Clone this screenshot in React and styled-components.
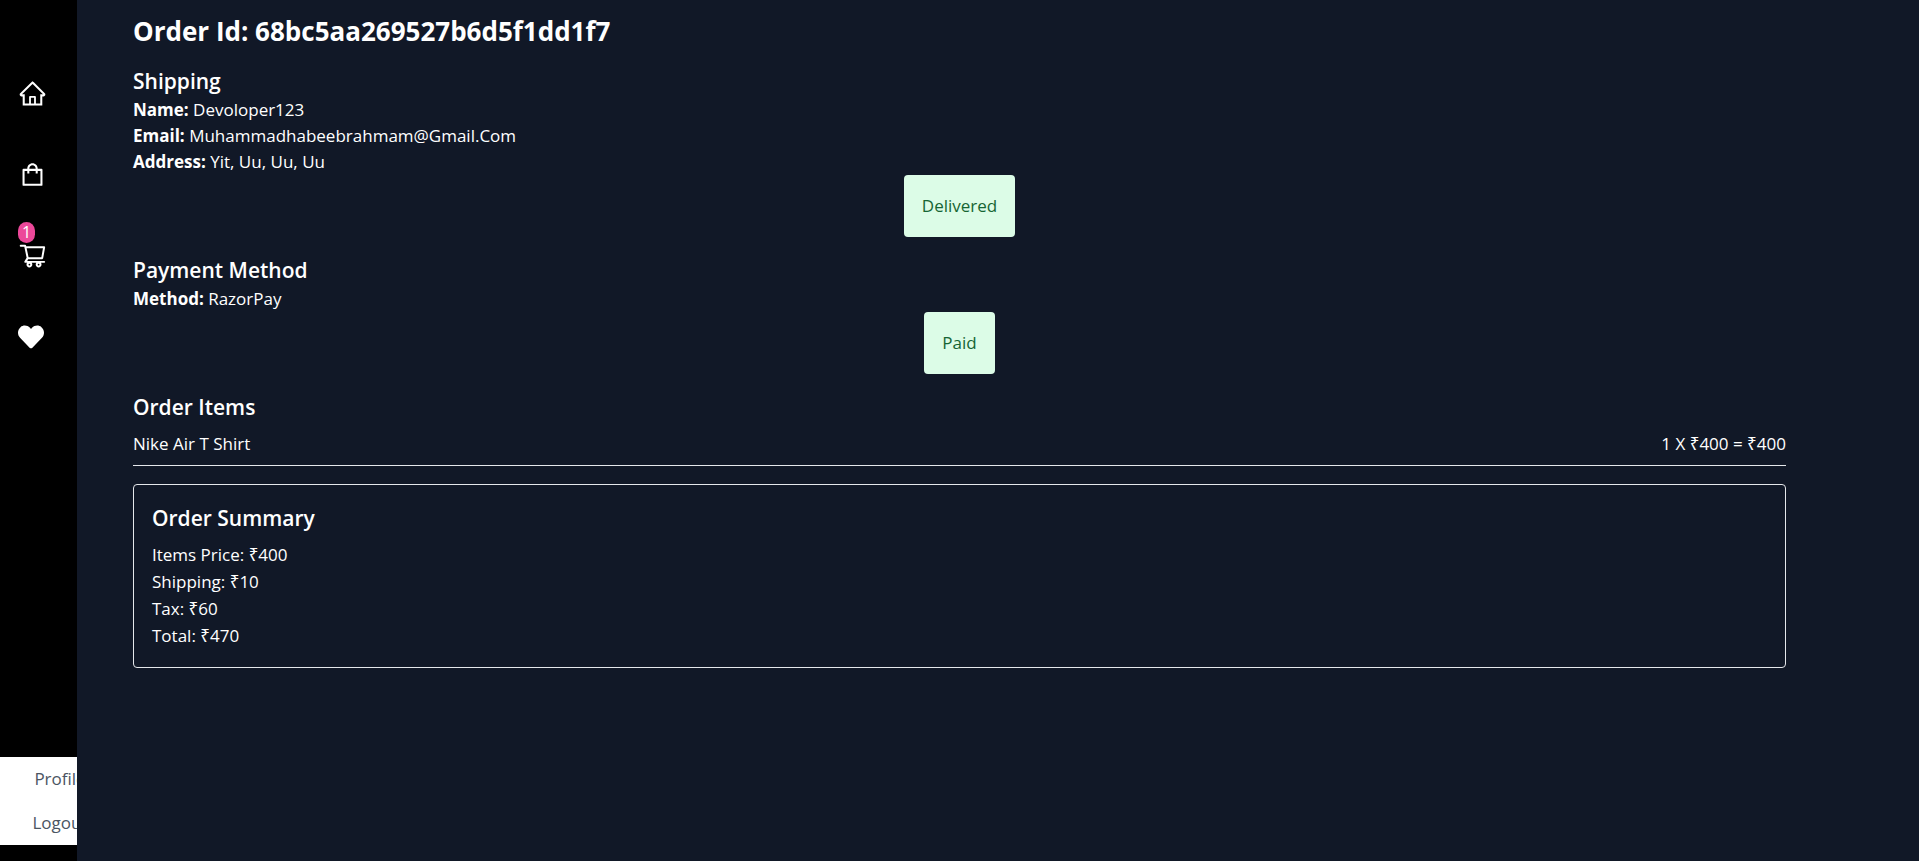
import React from "react";
import styled, { createGlobalStyle } from "styled-components";
import {
  AiOutlineHome,
  AiOutlineShopping,
  AiOutlineShoppingCart,
} from "react-icons/ai";
import { FaHeart } from "react-icons/fa";

const GlobalStyle = createGlobalStyle`
  *, *::before, *::after { box-sizing: border-box; }
  body {
    margin: 0;
    background: #111827;
    color: #fff;
    font-family: "Segoe UI", "Open Sans", "Noto Sans", sans-serif;
    font-size: 17px;
    line-height: 26px;
  }
  h1, h2, p, ul { margin: 0; padding: 0; }
  ul { list-style: none; }
`;

const Sidebar = styled.aside`
  position: fixed;
  inset: 0 auto 0 0;
  width: 77px;
  padding: 79px 0 16px;
  display: flex;
  flex-direction: column;
  justify-content: space-between;
  overflow: hidden;
  background: #000;
`;

const Nav = styled.nav`
  display: flex;
  flex-direction: column;
  align-items: flex-start;
  gap: 52px;
  padding-left: 18px;
`;

const NavLink = styled.a`
  position: relative;
  display: flex;
  align-items: center;
  height: 29px;
  color: #fff;
`;

const CartCount = styled.span`
  position: absolute;
  left: 0;
  bottom: 27px;
  padding: 0 4px;
  border-radius: 11px;
  background: #ec4899;
  font-size: 16px;
  line-height: 21px;
`;

const UserMenu = styled.ul`
  width: 120px;
  background: #fff;
`;

const menuItem = `
  display: block;
  width: 100%;
  padding: 9px 18px;
  border: 0;
  background: none;
  color: #4b5563;
  font: inherit;
  text-align: center;
  text-decoration: none;
`;

const MenuLink = styled.a`${menuItem}`;
const MenuButton = styled.button`${menuItem}`;

const Page = styled.main`
  max-width: 1689px;
  margin: 0 auto;
  padding: 16px 18px;
`;

const Title = styled.h1`
  margin-bottom: 20px;
  font-size: 26px;
  font-weight: 700;
  line-height: 30px;
`;

const Section = styled.section`
  margin-bottom: 18px;
`;

const Heading = styled.h2`
  margin-bottom: ${({ $spaced }) => ($spaced ? "8px" : "0")};
  font-size: 21px;
  font-weight: 600;
  line-height: 31px;
`;

const Status = styled.p`
  width: fit-content;
  margin: 0 auto;
  padding: 18px;
  border-radius: 4px;
  background: #dcfce7;
  color: #166534;
`;

const ItemRow = styled.li`
  display: flex;
  justify-content: space-between;
  padding-bottom: 8px;
  border-bottom: 1px solid #e5e7eb;
`;

const Summary = styled.section`
  padding: 18px;
  border: 1px solid #e5e7eb;
  border-radius: 4px;
`;

const Totals = styled.div`
  display: grid;
  gap: 1px;
`;

const details = [
  ["Name:", "Devoloper123"],
  ["Email:", "Muhammadhabeebrahmam@Gmail.Com"],
  ["Address:", "Yit, Uu, Uu, Uu"],
];

const totals = ["Items Price: ₹400", "Shipping: ₹10", "Tax: ₹60", "Total: ₹470"];

export default function App() {
  return (
    <>
      <GlobalStyle />
      <Sidebar>
        <Nav aria-label="Main">
          <NavLink href="#home" aria-label="Home"><AiOutlineHome size={29} /></NavLink>
          <NavLink href="#shop" aria-label="Shop"><AiOutlineShopping size={29} /></NavLink>
          <NavLink href="#cart" aria-label="Cart">
            <AiOutlineShoppingCart size={29} />
            <CartCount>1</CartCount>
          </NavLink>
          <NavLink href="#favorites" aria-label="Favorites"><FaHeart size={26} /></NavLink>
        </Nav>
        <UserMenu>
          <li><MenuLink href="#profile">Profile</MenuLink></li>
          <li><MenuButton type="button">Logout</MenuButton></li>
        </UserMenu>
      </Sidebar>
      <Page>
        <Title>Order Id: 68bc5aa269527b6d5f1dd1f7</Title>
        <Section>
          <Heading>Shipping</Heading>
          {details.map(([label, value]) => (
            <p key={label}><strong>{label}</strong> {value}</p>
          ))}
          <Status>Delivered</Status>
        </Section>
        <Section>
          <Heading>Payment Method</Heading>
          <p><strong>Method:</strong> RazorPay</p>
          <Status>Paid</Status>
        </Section>
        <Section>
          <Heading $spaced>Order Items</Heading>
          <ul>
            <ItemRow>
              <span>Nike Air T Shirt</span>
              <span>1 X ₹400 = ₹400</span>
            </ItemRow>
          </ul>
        </Section>
        <Summary>
          <Heading $spaced>Order Summary</Heading>
          <Totals>
            {totals.map((line) => <p key={line}>{line}</p>)}
          </Totals>
        </Summary>
      </Page>
    </>
  );
}
